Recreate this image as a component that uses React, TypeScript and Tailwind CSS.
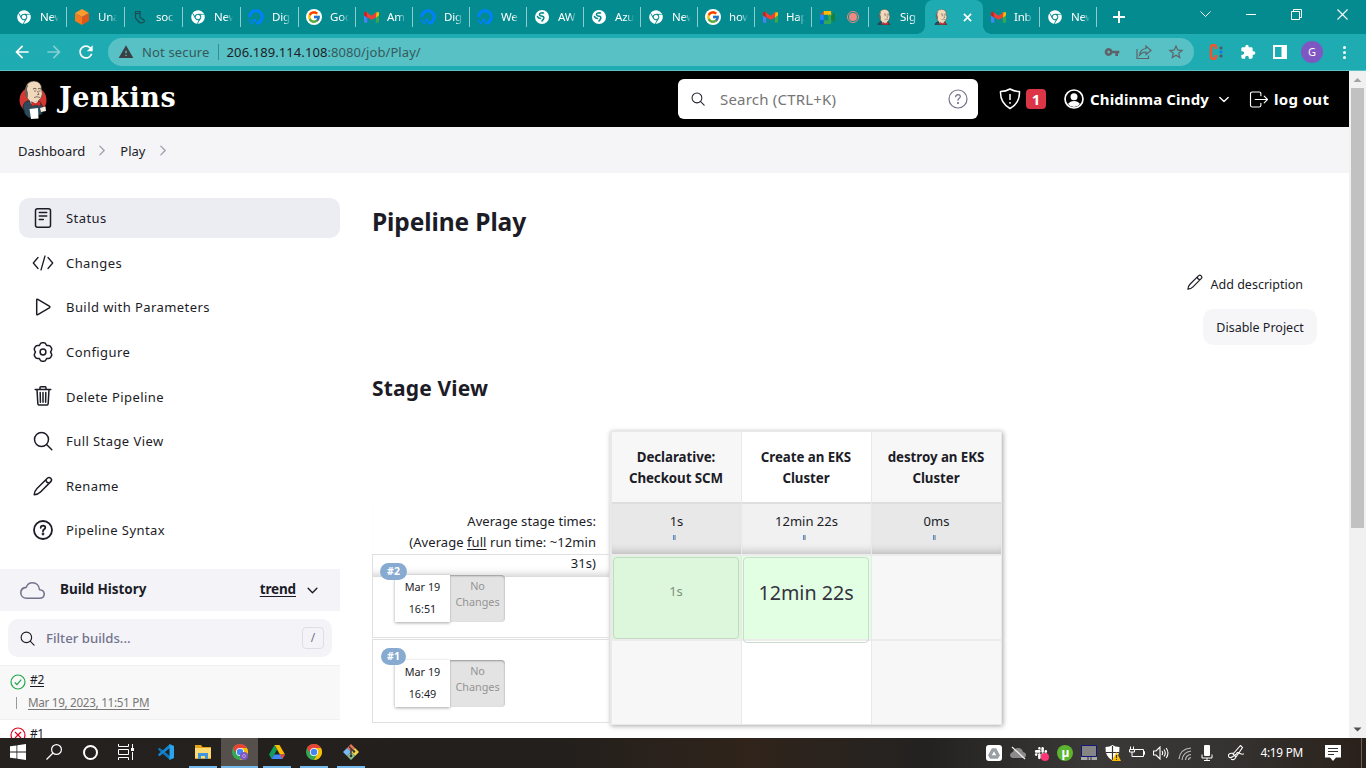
import React from "react";
import { FaChrome, FaDigitalOcean, FaSlack } from "react-icons/fa";
import { FcGoogle } from "react-icons/fc";
import { MdExtension, MdVpnKey, MdStarBorder, MdRefresh, MdArrowBack, MdArrowForward, MdWarning } from "react-icons/md";
import { IoCloudOutline } from "react-icons/io5";

function Butler({ className, box = "0 0 28 39", halo = true }: { className: string; box?: string; halo?: boolean }) {
  return (
    <svg viewBox={box} className={className}>
      {halo && <circle cx="14" cy="20" r="13.500" fill="#d33833" />}
      <path d="M8 21 Q4 23 4 27 L6 34 Q9 38 12 38 L23 34 L24 27 L21 22 Z" fill="#2f4a5a" stroke="#16222b" strokeWidth=".7" />
      <path d="M6.500 13 Q5.500 1.500 15 1 Q22.500 1.500 22.500 9 Q24.500 14 22 18 Q19 23 14 22.500 Q8 21 6.500 13 Z" fill="#f0d8bb" stroke="#3a302b" strokeWidth=".6" />
      <path d="M8 5.500 Q5 9 6.500 15 L8.800 18 L9 13 L8 10 Q8 7.500 9.500 5 Z" fill="#6d625a" />
      <path d="M14 9 Q15.500 7.800 17.500 9 M19 8.800 Q20.500 8 22 9" stroke="#3b2f2a" strokeWidth=".8" fill="none" />
      <path d="M15 11h2.200M19.500 11h2M18.500 11l1.500 3.500-2 .3M15 17.500 Q18 16 21 17.500" stroke="#5b473c" strokeWidth=".7" fill="none" />
      <path d="M11 20 Q15 23 19 21 L18 25 L12 24 Z" fill="#f5f1ea" />
      <path d="M12.500 21.500 L16.500 23.500 L21 21 L21.500 26 L16.500 24.700 L12.500 26.500 Z" fill="#dc2f2b" stroke="#7f1512" strokeWidth=".4" />
      <path d="M10.500 29 L19 28 L19.500 38.500 L12 39 Z" fill="#fff" />
      <path d="M21 28 L26.500 26.500 L27 31 L22 32 Z" fill="#f5ece0" />
    </svg>
  );
}

function Gmail() {
  return (
    <svg viewBox="0 0 16 12" className="h-3 w-[15px]">
      <path d="M0 2v9q0 1 1 1h2.500V4z" fill="#4285f4" />
      <path d="M16 2v9q0 1-1 1h-2.500V4z" fill="#34a853" />
      <path d="M12.500 1 16 .8v3.400l-3.500 2.600z" fill="#fbbc04" />
      <path d="M0 1.500Q.5 0 2.500.6L8 4.700 13.500.6 12.500 6.800 8 9 0 4.200z" fill="#ea4335" />
      <path d="M0 1.800Q.5.200 2.500.6L3.500 6.800 0 4.200z" fill="#c5221f" />
    </svg>
  );
}

function TabIcon({ kind }: { kind: string }) {
  if (kind === "chrome") return <FaChrome className="size-[14px] text-white" />;
  if (kind === "ocean") return <FaDigitalOcean className="size-4 text-[#0080ff]" />;
  if (kind === "google")
    return (
      <span className="flex size-4 items-center justify-center rounded-full bg-white">
        <FcGoogle className="size-3.5" />
      </span>
    );
  if (kind === "gmail") return <Gmail />;
  if (kind === "globe")
    return (
      <svg viewBox="0 0 14 14" className="size-[14px]">
        <circle cx="7" cy="7" r="7" fill="#fff" />
        <path d="M8.500 3Q4.500 2.500 4.500 4.500 4.700 6.200 7.500 6.300q2 .5 1 2.700L7 11M2.500 6.500Q3 8.300 5.500 8.500" fill="none" stroke="#038b90" strokeWidth="1.600" strokeLinecap="round" />
      </svg>
    );
  if (kind === "box")
    return (
      <svg viewBox="0 0 16 16" className="size-4">
        <path d="M8 0l7 4-7 4-7-4z" fill="#fb9a2d" />
        <path d="M1 4l7 4v8l-7-4z" fill="#f47c20" />
        <path d="M15 4l-7 4v8l7-4z" fill="#e0571b" />
      </svg>
    );
  if (kind === "sock")
    return (
      <svg viewBox="0 0 16 16" className="size-4" fill="none" stroke="#1c4a50" strokeWidth="1.200">
        <path d="M3.500 2.500h4.500v6l4 2.500q1 1.500-.5 2.500-3 .8-4.500-.5l-3.500-4z M3.500 4.500h4.500" />
      </svg>
    );
  if (kind === "meet")
    return (
      <svg viewBox="0 0 16 14" className="h-[13px] w-[15px]">
        <path d="M0 4l4-4v4z" fill="#ea4335" />
        <path d="M4 0h7q1 0 1 1v4H9V4H4z" fill="#fbbc04" />
        <path d="M0 4h4v6H0z" fill="#2684fc" />
        <path d="M0 10h4v4H1q-1 0-1-1z" fill="#0066da" />
        <path d="M4 10h5V4h3v9q0 1-1 1H4z" fill="#34a853" />
        <path d="M12 5.500l3-3q1-.5 1 .5v8q0 1-1 .5l-3-2.500z" fill="#188038" />
      </svg>
    );
  return <Butler className="size-4" box="2 0.500 24 25.500" halo={false} />;
}

const tabs: [string, string][] = [
  ["chrome", "New"], ["box", "Unab"], ["sock", "soc"], ["chrome", "New"], ["ocean", "Dig"],
  ["google", "Goo"], ["gmail", "Am"], ["ocean", "Dig"], ["ocean", "We"], ["globe", "AW"],
  ["globe", "Azu"], ["chrome", "New"], ["google", "how"], ["gmail", "Hap"], ["meet", ""],
  ["butler", "Sig"], ["butler", "active"], ["gmail", "Inb"], ["chrome", "New"],
];

function Tabs() {
  return (
    <div className="flex h-[34px] bg-[#038b90] pl-[9px] text-white">
      {tabs.map(([kind, label], i) => {
        const active = label === "active";
        const width = active ? "w-[58px] -ml-px" : i < 5 ? "w-[58px]" : "w-[57px]";
        return (
          <div
            key={i}
            className={`${width} relative flex shrink-0 items-center ${active ? "rounded-t-lg bg-[#1fabb2] pl-[8px]" : "pl-[7px]"}`}
          >
            <span className="flex w-4 shrink-0 justify-center">
              <TabIcon kind={kind} />
            </span>
            {active ? (
              <svg viewBox="0 0 10 10" className="ml-[14px] size-[9px]" stroke="#fff" strokeWidth="1.800">
                <path d="M1 1l8 8M9 1l-8 8" />
              </svg>
            ) : kind === "meet" ? (
              <span className="ml-[12px] flex size-3 items-center justify-center rounded-full border border-[#f08a80]">
                <span className="size-2 rounded-full bg-[#f08a80]" />
              </span>
            ) : (
              <span className="ml-2 w-[19px] overflow-hidden whitespace-nowrap text-[11.500px] leading-4 tracking-[-0.200px] [mask-image:linear-gradient(90deg,#000_60%,transparent)]">
                {label}
              </span>
            )}
            {!active && i !== 15 && <span className="absolute top-[7px] right-0 h-5 w-px bg-[#8fcbce]" />}
            {active && (
              <>
                <span className="absolute bottom-0 -left-2 size-2 bg-[radial-gradient(circle_at_0_0,transparent_7.500px,#1fabb2_8px)]" />
                <span className="absolute -right-2 bottom-0 size-2 bg-[radial-gradient(circle_at_100%_0,transparent_7.500px,#1fabb2_8px)]" />
              </>
            )}
          </div>
        );
      })}
      <svg viewBox="0 0 12 12" className="mt-[11px] ml-[16px] size-3 shrink-0" stroke="#fff" strokeWidth="2">
        <path d="M6 0v12M0 6h12" />
      </svg>
      <div className="ml-auto flex h-7 shrink-0 items-center gap-[35px] pr-[18px]">
        <svg viewBox="0 0 11 7" className="h-[7px] w-[11px]" fill="none" stroke="#fff">
          <path d="M.5.500l5 5 5-5" />
        </svg>
        <svg viewBox="0 0 10 10" className="size-[10px]" stroke="#fff">
          <path d="M0 5.500h10" />
        </svg>
        <svg viewBox="0 0 11 11" className="size-[11px]" fill="none" stroke="#fff">
          <path d="M.5 2.500h8v8h-8zM2.500 2.500v-2h8v8h-2" />
        </svg>
        <svg viewBox="0 0 11 11" className="size-[11px]" stroke="#fff" strokeWidth="1.100">
          <path d="M.5.500l10 10M10.500.500l-10 10" />
        </svg>
      </div>
    </div>
  );
}

function Toolbar() {
  return (
    <div className="flex h-[37px] items-center border-b border-[#5cc1c5] bg-[#1fabb2] pl-[12px]">
      <MdArrowBack className="size-[20px] text-white" />
      <MdArrowForward className="ml-[12px] size-[20px] text-[#83d0d3]" />
      <MdRefresh className="ml-[12px] size-5 text-white" />
      <div className="ml-[12px] flex h-7 w-[1086px] items-center rounded-full bg-[#57c1c5] pl-[10px] text-[13px] text-[#36595b]">
        <MdWarning className="size-4 text-[#3c4043]" />
        <span className="mt-px ml-2 tracking-[.150px]">Not secure</span>
        <span className="ml-2 h-4 w-px bg-[#368b8f]" />
        <span className="mt-px ml-[8px] tracking-[0.080px]">
          <span className="text-[#202124]">206.189.114.108</span>:8080/job/Play/
        </span>
        <MdVpnKey className="ml-auto size-4 text-[#5f6368]" />
        <svg viewBox="0 0 16 16" className="ml-4 size-4" fill="none" stroke="#5f6368" strokeWidth="1.200">
          <path d="M1 5v9.500h11.500v-3M3.500 11q1-6 6.500-6.500V2l5 4.500-5 4V8q-4 0-6.500 3z" />
        </svg>
        <MdStarBorder className="mr-[9px] ml-[15px] size-[18px] text-[#5f6368]" />
      </div>
      <svg viewBox="0 0 16 16" className="ml-[14px] size-4">
        <path d="M8 5V3q0-1.800-2-1.800H5Q3 1.200 3 3v10q0 1.800 2 1.800h1q2 0 2-1.800v-2" fill="none" stroke="#f0562b" strokeWidth="2.600" />
        <circle cx="13" cy="4" r="1.500" fill="#555" />
        <circle cx="13" cy="8" r="1.500" fill="#1a73e8" />
        <circle cx="13" cy="12" r="1.500" fill="#555" />
      </svg>
      <MdExtension className="ml-4 size-4 text-white" />
      <svg viewBox="0 0 14 14" className="ml-[17px] size-[14px]">
        <path d="M0 0h14v14H0zM2 2v10h6.500V2z" fill="#fff" fillRule="evenodd" />
      </svg>
      <span className="ml-[14px] flex size-[22px] items-center justify-center rounded-full bg-[#7e57c2] text-[11px] text-white">G</span>
      <span className="ml-5 flex flex-col gap-[2px]">
        <i className="size-[3px] rounded-full bg-white" />
        <i className="size-[3px] rounded-full bg-white" />
        <i className="size-[3px] rounded-full bg-white" />
      </span>
    </div>
  );
}

function SearchGlyph({ className }: { className: string }) {
  return (
    <svg viewBox="0 0 20 20" className={className} fill="none" stroke="currentColor" strokeWidth="1.500" strokeLinecap="round">
      <circle cx="8.500" cy="8.500" r="7" />
      <path d="M13.800 13.800l5 5" />
    </svg>
  );
}

function Question({ className }: { className: string }) {
  return (
    <svg viewBox="0 0 20 20" className={className} fill="none" stroke="currentColor" strokeWidth="1.500">
      <circle cx="10" cy="10" r="9" />
      <path d="M7.700 7.800Q7.800 5.800 10 5.700q2.300.1 2.300 1.900 0 1.100-1.200 1.800-1.100.6-1.100 1.900" strokeLinecap="round" />
      <circle cx="10" cy="14" r=".5" fill="currentColor" />
    </svg>
  );
}

function Chevron({ className }: { className: string }) {
  return (
    <svg viewBox="0 0 12 8" className={className} fill="none" stroke="currentColor" strokeWidth="1.600" strokeLinecap="round" strokeLinejoin="round">
      <path d="M1 1.500l5 5 5-5" />
    </svg>
  );
}

function Header() {
  return (
    <header className="flex h-14 items-center bg-black pl-[19px] text-white">
      <Butler className="h-[39px] w-7" />
      <span className="mb-[3px] ml-[12px] w-[119px] font-['DejaVu_Serif'] text-[27px] leading-8 font-bold tracking-[.550px]">Jenkins</span>
      <div className="ml-[500px] flex h-10 w-[300px] items-center rounded-md bg-white pl-[13px] text-[#757575]">
        <SearchGlyph className="size-[14px] text-[#22222f]" />
        <span className="ml-[15px] text-[15px] tracking-[.200px]">Search (CTRL+K)</span>
        <Question className="mr-[10px] ml-auto size-5 stroke-[1.200] text-[#73738c]" />
      </div>
      <svg viewBox="0 0 22 22" className="ml-[21px] size-[22px]" fill="none" stroke="#fff" strokeWidth="1.500" strokeLinejoin="round">
        <path d="M11 1Q15 3.500 20.500 3.500 21 15 11 20.500 1 15 1.500 3.500 7 3.500 11 1z" />
        <path d="M11 6v6M11 14v1.800" />
      </svg>
      <span className="ml-[5px] flex h-5 w-5 items-center justify-center rounded bg-[#dc3545] text-[15px] font-bold">1</span>
      <svg viewBox="0 0 20 20" className="ml-[18px] size-5">
        <circle cx="10" cy="10" r="9" fill="none" stroke="#fff" strokeWidth="1.700" />
        <circle cx="10" cy="7.800" r="3.500" fill="#fff" />
        <path d="M4 15q2.200-3 6-3t6 3q-2.500 3-6 3t-6-3z" fill="#fff" />
      </svg>
      <span className="ml-[6px] w-[120px] text-[15px] font-bold tracking-[.140px] whitespace-nowrap">Chidinma Cindy</span>
      <Chevron className="ml-[9px] h-[7px] w-[10px]" />
      <svg viewBox="0 0 20 18" className="ml-[20px] h-[17px] w-5" fill="none" stroke="#fff" strokeWidth="1.200" strokeLinecap="round" strokeLinejoin="round">
        <path d="M12 5V3q0-2-2-2H3Q1 1 1 3v12q0 2 2 2h7q2 0 2-2v-2M6 9h13M15.500 5.500L19 9l-3.500 3.500" />
      </svg>
      <span className="ml-[5px] text-[15px] font-bold tracking-[.350px] whitespace-nowrap">log out</span>
    </header>
  );
}

const gearPath =
  Array.from({ length: 73 }, (_, i) => {
    const a = (i * Math.PI) / 36;
    const r = 8.7 + 0.85 * Math.cos(6 * a) - 0.25 * Math.cos(12 * a);
    return `${i ? "L" : "M"}${(10 + r * Math.sin(a)).toFixed(2)} ${(10 - r * Math.cos(a)).toFixed(2)}`;
  }).join("") + "Z";

function PencilPath() {
  return <path d="M1.200 18.800Q1.500 15 4 12.500L14.600 2q1.500-1.300 3.100.3 1.600 1.600.3 3.100L7.500 16Q5 18.500 1.200 18.800zM13 3.600Q13 7 16.400 7" />;
}

function SideIcon({ name }: { name: string }) {
  if (name === "search") return <SearchGlyph className="size-5" />;
  if (name === "help") return <Question className="size-5 stroke-[1.800]" />;
  return (
    <svg viewBox="0 0 20 20" className="size-5 overflow-visible" fill="none" stroke="currentColor" strokeWidth="1.500" strokeLinecap="round" strokeLinejoin="round">
      {name === "status" && <path d="M4.500.8h11q2 0 2 2v14.400q0 2-2 2h-11q-2 0-2-2V2.800q0-2 2-2zM6.300 4.600h7.400M6.300 8h7.400M6.300 11.400h4" />}
      {name === "code" && <path d="M5 4.500L.3 10 5 15.500M15 4.500l4.700 5.500-4.700 5.500M12 3L8 17" strokeWidth="1.300" />}
      {name === "play" && <path d="M3.700 3q0-1.200 1.100-.6l11.500 6.700q1.200.9 0 1.800L4.800 17.600q-1.100.6-1.100-.6z" />}
      {name === "gear" && (
        <>
          <path d={gearPath} />
          <circle cx="10" cy="10" r="2.900" />
        </>
      )}
      {name === "trash" && <path d="M2.200 3.500h15.600M4 3.500l.8 13.700q.1 1.900 2 1.900h6.400q1.900 0 2-1.900L16 3.500M7 3.200v-1.500q0-.9.900-.9h4.200q.9 0 .9.900v1.500M7.200 6.500l.2 9.700M10 6.500v9.700M12.800 6.500l-.2 9.700" />}
      {name === "pencil" && <PencilPath />}
    </svg>
  );
}

const menu: [string, string][] = [
  ["status", "Status"],
  ["code", "Changes"],
  ["play", "Build with Parameters"],
  ["gear", "Configure"],
  ["trash", "Delete Pipeline"],
  ["search", "Full Stage View"],
  ["pencil", "Rename"],
  ["help", "Pipeline Syntax"],
];

function Sidebar() {
  return (
    <aside className="w-[340px] shrink-0 pt-[25px]">
      <nav className="flex flex-col gap-[4.600px] pl-[19px]">
        {menu.map(([icon, label]) => (
          <a key={label} className={`flex h-10 items-center rounded-[10px] pl-[14px] ${icon === "status" ? "bg-[#ecedf3]" : ""}`}>
            <SideIcon name={icon} />
            <span className="mt-[2px] ml-[13px] text-[13px] tracking-[.430px]">{label}</span>
          </a>
        ))}
      </nav>
      <div className="mt-[19px] flex h-[42px] items-center bg-[#f3f3f8] pl-5">
        <IoCloudOutline className="size-[25px] text-[#73738c]" />
        <span className="mb-[2px] ml-[15px] text-[13.500px] font-bold tracking-[-0.050px]">Build History</span>
        <span className="mb-[2px] ml-auto text-[13.500px] font-bold tracking-[-0.150px] underline underline-offset-2">trend</span>
        <Chevron className="mr-[22px] ml-[11px] h-[7px] w-[11px]" />
      </div>
      <div className="mt-2 ml-2 flex h-[38px] w-[324px] items-center rounded-[10px] bg-[#f3f3f8] pl-3">
        <SearchGlyph className="size-[15px]" />
        <span className="mt-[2px] ml-[11px] text-[13.200px] font-medium text-[#73738c]">Filter builds...</span>
        <span className="mr-[8px] ml-auto flex h-[22px] w-[22px] items-center justify-center rounded border border-[#dedee8] text-[12px] text-[#73738c]">/</span>
      </div>
      <div className="mt-2 h-[55px] border-y border-[#f0f0f0] bg-[#f8f8f8] pl-[10px]">
        <div className="flex h-[28px] items-center">
          <svg viewBox="0 0 16 16" className="mt-[3px] size-4" fill="none" stroke="#1ea64b" strokeWidth="1.200">
            <circle cx="8" cy="8" r="7" />
            <path d="M4.800 8.500l2.200 2.200 4.200-5" />
          </svg>
          <span className="ml-1 text-[12px] tracking-[-0.300px] underline underline-offset-2">#2</span>
        </div>
        <div className="flex h-[18px] items-center">
          <span className="ml-[6px] h-3 w-px bg-[#999]" />
          <span className="ml-[11px] text-[11.700px] tracking-[-0.310px] text-[#777] underline underline-offset-2">Mar 19, 2023, 11:51 PM</span>
        </div>
      </div>
      <div className="flex h-[27px] items-center pl-[10px]">
        <svg viewBox="0 0 16 16" className="mt-[3px] size-4" fill="none" stroke="#e6001f" strokeWidth="1.200">
          <circle cx="8" cy="8" r="7" />
          <path d="M5 5l6 6M11 5l-6 6" />
        </svg>
        <span className="ml-1 text-[12px] tracking-[-0.600px] underline underline-offset-2">#1</span>
      </div>
    </aside>
  );
}

function RunRow({ id, time }: { id: string; time: string }) {
  return (
    <div className="relative z-10 mb-px h-[84px] border border-[#e0e0e0] pt-[20px] pl-[22px]">
      <div className="flex h-[47px] w-[110px] text-center text-[10.800px]">
        <div className="w-[55px] bg-white pt-[1px] leading-[22px] shadow-[0_1px_3px_rgba(0,0,0,.35)]">
          Mar 19
          <br />
          {time}
        </div>
        <div className="w-[55px] rounded-r bg-[#e3e3e3] pt-[3px] leading-[15.500px] text-[#949494] shadow-[inset_0_1px_2px_rgba(0,0,0,.35)]">
          No
          <br />
          Changes
        </div>
      </div>
      <span className={`absolute top-[8px] flex h-[17px] items-center justify-center rounded-full bg-[#87aad0] text-[10.500px] font-bold text-white ${id === "#1" ? "left-[8px] w-[25px]" : "left-[7px] w-[27px]"}`}>{id}</span>
    </div>
  );
}

function Avg({ value, tone }: { value: string; tone: string }) {
  return (
    <div className={`flex h-[50px] flex-col items-center pt-[7px] text-[13px] leading-[21px] shadow-[inset_0_-9px_8px_-7px_rgba(0,0,0,.22)] ${tone}`}>
      {value}
      <span className="mt-[3px] mr-[5px] flex h-[5px] w-[3px] bg-[#a3adb5]">
        <i className="w-px bg-[#4d8be0]" />
      </span>
    </div>
  );
}

function StageColumn({ title, avg, shade, children }: { title: [string, string]; avg: string; shade: boolean; children?: React.ReactNode }) {
  return (
    <div className={`w-[130px] border-r border-[#e9e9e9] ${shade ? "bg-[#f7f7f7]" : "bg-white"}`}>
      <div className="h-[72px] border-b-2 border-[#dedede] pt-[15px] pr-px text-center text-[13.300px] leading-[21px] font-bold tracking-[-0.050px]">
        {title[0]}
        <br />
        {title[1]}
      </div>
      <Avg value={avg} tone={shade ? "bg-[#e8e8e8]" : "bg-[#f1f1f1]"} />
      <div className="h-[87px] border-y-2 border-[#ececec]">{children}</div>
    </div>
  );
}

function StageView() {
  return (
    <div className="mt-[28px] flex">
      <div className="w-[238px] pt-[73px]">
        <div className="h-[50px]">
          <div className="h-[73px] pt-[7px] pr-[14px] text-right text-[13px] leading-[21px] tracking-[.060px] shadow-[inset_0_-9px_8px_-7px_rgba(0,0,0,.22)]">
            Average stage times:
            <br />
            (Average <u className="underline-offset-2">full</u> run time: ~12min
            <br />
            31s)
          </div>
        </div>
        <RunRow id="#2" time="16:51" />
        <RunRow id="#1" time="16:49" />
      </div>
      <div className="flex h-[294px] w-[392px] border border-r-0 border-l-2 border-[#e9e9e9] shadow-[1px_1px_5px_rgba(0,0,0,.35)]">
        <StageColumn title={["Declarative:", "Checkout SCM"]} avg="1s" shade>
          <div className="h-full bg-[#dcf7dc] pt-px pr-[2px] pl-px">
            <div className="flex h-[82px] items-center justify-center rounded border border-[#c4d8c4] pb-[13px] text-[13px] text-[#7f907f]">1s</div>
          </div>
        </StageColumn>
        <StageColumn title={["Create an EKS", "Cluster"]} avg="12min 22s" shade={false}>
          <div className="h-full bg-[#e3ffe3] pt-px pr-[2px] pl-px">
            <div className="flex h-[86px] items-center justify-center rounded border border-[#ccdccc] pb-[14px] text-[19.700px] text-[#33333f]">12min 22s</div>
          </div>
        </StageColumn>
        <StageColumn title={["destroy an EKS", "Cluster"]} avg="0ms" shade />
      </div>
    </div>
  );
}

function Page() {
  return (
    <div className="flex h-[667px] overflow-hidden">
      <div className="w-[1349px] shrink-0 bg-white">
        <Header />
        <div className="flex h-[46px] items-center bg-[#f5f5f8] pl-[18px] text-[13px]">
          <span className="mt-[3px]">Dashboard</span>
          <Chevron className="mr-[12px] ml-[11px] h-[7px] w-[12px] -rotate-90 text-[#a0a0b0]" />
          <span className="mt-[3px]">Play</span>
          <Chevron className="mx-[12px] h-[7px] w-[12px] -rotate-90 text-[#a0a0b0]" />
        </div>
        <div className="flex">
          <Sidebar />
          <main className="w-[977px] pt-[31px] pl-[32px]">
            <h1 className="text-[24.500px] leading-[35px] font-bold tracking-[-0.100px]">Pipeline Play</h1>
            <div className="mt-[32px] flex h-[28px] items-center justify-end pr-[14px] text-[12.500px]">
              <svg viewBox="0 0 20 20" className="mr-[8px] mb-[6px] size-4" fill="none" stroke="currentColor" strokeWidth="1.500">
                <PencilPath />
              </svg>
              Add description
            </div>
            <div className="mt-[10px] ml-auto flex h-9 w-[114px] items-center justify-center rounded-[10px] bg-[#f6f6f9] pt-[2px] text-[12.500px]">Disable Project</div>
            <h2 className="mt-[28px] text-[21px] leading-[30px] font-bold tracking-[.150px]">Stage View</h2>
            <StageView />
          </main>
        </div>
      </div>
      <div className="flex h-full w-[17px] flex-col items-center bg-[#f1f1f1]">
        <svg viewBox="0 0 17 17" className="size-[17px] shrink-0">
          <path d="M4.500 11L8.500 7l4 4z" fill="#a3a3a3" />
        </svg>
        <div className="h-[440px] w-[13px] bg-[#c1c1c1]" />
        <svg viewBox="0 0 17 17" className="mt-auto size-[17px] shrink-0">
          <path d="M4.500 6.500l4 4 4-4z" fill="#505050" />
        </svg>
      </div>
    </div>
  );
}

function ChromeColor({ badge }: { badge?: boolean }) {
  return (
    <svg viewBox="0 0 16 16" className="size-4">
      <circle cx="8" cy="8" r="8" fill="#34a853" />
      <path d="M1.070 4A8 8 0 0 1 14.930 4L8 4 4.540 10z" fill="#ea4335" />
      <path d="M14.930 4A8 8 0 0 1 8 16L11.460 10 8 4z" fill="#fbbc04" />
      <circle cx="8" cy="8" r="4" fill="#fff" />
      <circle cx="8" cy="8" r="3.200" fill="#4285f4" />
      {badge && <circle cx="12" cy="12" r="4" fill="#7e57c2" />}
      {badge && <circle cx="12" cy="12" r="1.500" fill="none" stroke="#d4c6ec" strokeWidth=".6" />}
    </svg>
  );
}

function Slot({ children, running, active, narrow }: { children: React.ReactNode; running?: boolean; active?: boolean; narrow?: boolean }) {
  return (
    <div className={`flex h-full justify-center ${narrow ? "w-9" : "w-[37px]"} ${active ? "bg-[#55504c]" : ""}`}>
      <div className={`flex h-full items-center justify-center ${active ? "w-full" : "w-7"} ${running ? "border-b-2 border-[#76b9ed]" : "border-b-2 border-transparent"}`}>{children}</div>
    </div>
  );
}

function Taskbar() {
  return (
    <div className="flex h-[30px] items-center bg-[linear-gradient(90deg,#24211e_0%,#221f1c_40%,#30241b_55%,#232221_68%,#3a3938_80%,#353331_90%,#292019_100%)] text-white">
      <div className="flex h-full">
        <Slot narrow>
          <svg viewBox="0 0 16 16" className="size-4" fill="#fff">
            <path d="M0 2.300L6.500 1.400v6.200H0zM7.300 1.300L16 0v7.600H7.300zM0 8.400h6.500v6.200L0 13.700zM7.300 8.400H16V16l-8.700-1.300z" />
          </svg>
        </Slot>
        <Slot narrow>
          <svg viewBox="0 0 16 16" className="size-4" fill="none" stroke="#fff" strokeWidth="1.200">
            <circle cx="10.500" cy="5.500" r="4.900" />
            <path d="M7 9L.5 15.500" />
          </svg>
        </Slot>
        <Slot narrow>
          <span className="size-[15px] rounded-full border-2 border-white" />
        </Slot>
        <Slot narrow>
          <svg viewBox="0 0 16 16" className="size-4" fill="none" stroke="#fff">
            <path d="M.5 0v2.500h10V0M.5 5.500h10v5H.5zM.5 16v-2.500h10V16M14.500 0v4M14.500 8v8" />
            <path d="M13 4h3v3h-3z" fill="#fff" stroke="none" />
          </svg>
        </Slot>
      </div>
      <div className="ml-[3px] flex h-full">
        <Slot>
          <svg viewBox="0 0 16 16" className="size-4">
            <path d="M0 5l1.500-1.200L12 12v4L.5 6z" fill="#0e76bd" />
            <path d="M0 11l1.500 1.200L12 4V0L.5 10z" fill="#1685cf" />
            <path d="M11.500 0L16 2v12l-4.500 2z" fill="#29a4ee" />
          </svg>
        </Slot>
        <Slot running>
          <svg viewBox="0 0 16 14" className="h-[14px] w-4">
            <path d="M0 0h6l1.500 2H16v12H0z" fill="#e8a317" />
            <path d="M0 3h16v10H0z" fill="#fcdb74" />
            <path d="M3 14V8h10v6h-3v-3H6v3z" fill="#3f96dc" />
          </svg>
        </Slot>
        <Slot running active>
          <ChromeColor badge />
        </Slot>
        <Slot running>
          <svg viewBox="0 0 16 14" className="h-[14px] w-4">
            <path d="M5.500 0h5L16 9.500h-5z" fill="#fbbc04" />
            <path d="M5.500 0L8 4.500 2.700 14 0 9.500z" fill="#0f9d58" />
            <path d="M5 9.500h11L13.300 14H2.700z" fill="#4285f4" />
            <path d="M11 9.500h5L13.300 14z" fill="#ea4335" />
          </svg>
        </Slot>
        <Slot running>
          <ChromeColor />
        </Slot>
        <Slot running>
          <svg viewBox="0 0 16 16" className="size-4">
            <path d="M8 0l4 4-4 4-4-4z" fill="#e8735a" />
            <path d="M4 4l4 4-4 4-4-4z" fill="#79b8f3" />
            <path d="M12 4l4 4-4 4-4-4z" fill="#f3d54e" />
            <path d="M8 8l4 4-4 4-4-4z" fill="#8bc28c" />
            <path d="M6 2.500l5 5M8 5v7" stroke="#333" strokeWidth="1.200" />
            <circle cx="8" cy="12" r="1.300" fill="#333" />
            <circle cx="11" cy="7.500" r="1.300" fill="#333" />
          </svg>
        </Slot>
      </div>
      <div className="ml-auto flex items-center gap-2 pr-1">
        <span className="flex size-4 items-center justify-center rounded-[3px] bg-white">
          <svg viewBox="0 0 14 12" className="h-[11px] w-3">
            <path d="M4.500 0h5L14 8l-2.500 4h-9L0 8z M7 3.500L4.500 8h5z" fill="#9a9fa5" fillRule="evenodd" />
          </svg>
        </span>
        <svg viewBox="0 0 16 16" className="size-4">
          <path d="M3 13q-3-.5-3-3 .3-2.500 3-3 1-4 5-4t5 4q3 .5 3 3t-3 3z" fill="#8b8b8b" />
          <path d="M2 2l13 12" stroke="#eee" strokeWidth="1.300" />
        </svg>
        <span className="relative -ml-px flex size-4 items-center justify-center">
          <FaSlack className="size-[14px]" />
          <span className="absolute right-0 bottom-0 size-2 rounded-full bg-[#ff3577]" />
        </span>
        <span className="flex size-4 items-center justify-center rounded-full bg-[#5cb531] text-[12px] leading-none font-bold">µ</span>
        <svg viewBox="0 0 16 16" className="size-4">
          <path d="M.5.500h15v11H.5z" fill="#858585" stroke="#15157a" />
          <path d="M0 12h16v3H0z" fill="#aaa" />
          <path d="M7 12v3M10 12v3" stroke="#333" />
        </svg>
        <svg viewBox="0 0 16 16" className="size-4">
          <path d="M7.500 0Q10 2 14.500 2q.5 10-7 13.500Q0 12 .5 2 5 2 7.500 0z" fill="#fff" />
          <path d="M7.500 1v14M1 7.500h13" stroke="#333" strokeWidth="1.200" />
          <path d="M11.500 7L16 16H7z" fill="#fbbc04" />
          <path d="M11.500 10v3M11.500 14v1" stroke="#333" strokeWidth="1.100" />
        </svg>
        <svg viewBox="0 0 16 16" className="size-4" fill="none" stroke="#fff">
          <path d="M5.500 4.500h9v7h-9M14.500 6.500h1v3h-1M1.500 1.500v3M4.500 1.500v3M.5 4.500h5v2.500H.5zM3 7v4.500h4" />
        </svg>
        <svg viewBox="0 0 16 16" className="size-4" fill="none" stroke="#fff" strokeWidth="1.100">
          <path d="M.5 6h2.500l4-4v12l-4-4H.5zM9 6q1.300 2 0 4M11 4.500q2.500 3.500 0 7M13.200 3q3.500 5 0 10" />
        </svg>
        <svg viewBox="0 0 16 16" className="size-4" fill="none" stroke="#bbb" strokeWidth="1.200">
          <path d="M2 14Q3 4 14 3M5 15q1-8 9-9M8.500 15q.5-5 5.500-5.500M11.500 15q0-2 2.500-2.500" />
        </svg>
        <svg viewBox="0 0 16 16" className="-ml-[2px] size-4">
          <rect x="5" y="0" width="6" height="11" rx="1" fill="#fff" />
          <path d="M3 9.500v3.500h10V9.500M8 13v2.500M5 15.500h6" stroke="#fff" fill="none" />
        </svg>
        <svg viewBox="0 0 16 16" className="ml-[5px] size-4" fill="none" stroke="#fff" strokeWidth="1.100">
          <path d="M5 9l7.500-8.500 2 2L8 12zM6 8Q0 8 .5 11t4.500.5 4-3.500 3 .5 4 0M3 14q3 2 5-2" />
        </svg>
        <span className="ml-[8px] text-[11.800px] tracking-[-0.250px]">4:19 PM</span>
        <svg viewBox="0 0 16 16" className="ml-[14px] size-4">
          <path d="M0 0h16v12.500h-5L8 16l-3-3.500H0z" fill="#fff" />
          <path d="M3 3.500h10M3 6.500h10M3 9.500h6" stroke="#333" strokeWidth="1.100" />
        </svg>
        <span className="ml-[12px] h-[30px] w-px bg-[#66615d]" />
      </div>
    </div>
  );
}

export default function App() {
  return (
    <div className="h-[768px] w-[1366px] overflow-hidden bg-white font-['Noto_Sans',sans-serif] text-[#1c1c27]">
      <Tabs />
      <Toolbar />
      <Page />
      <Taskbar />
    </div>
  );
}
